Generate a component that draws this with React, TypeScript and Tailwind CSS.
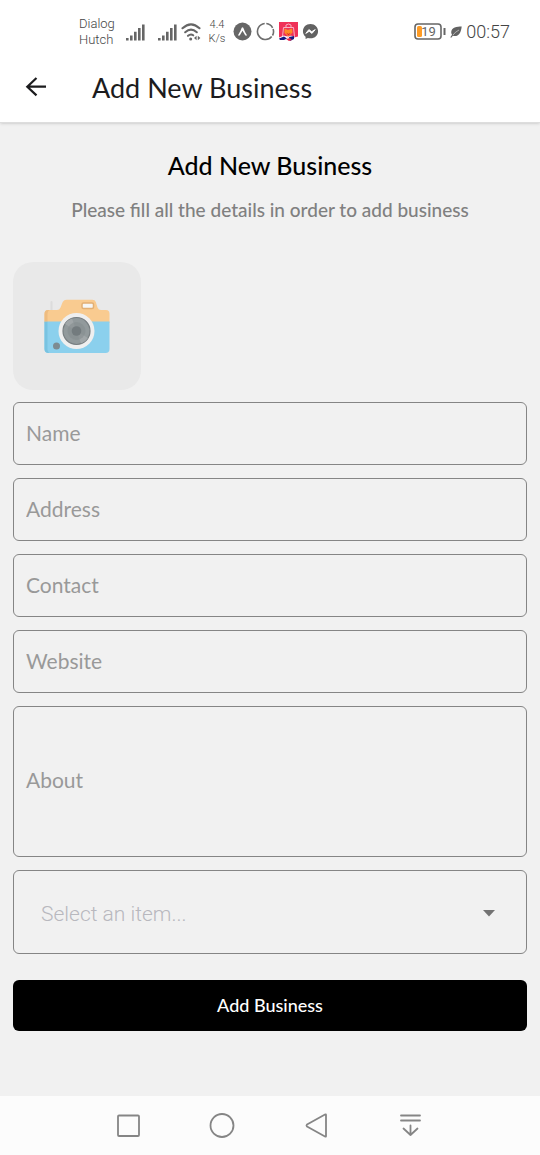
import { useState } from "react";
import type { ReactNode } from "react";

function Signal() {
  return (
    <svg className="h-5 w-5" viewBox="0 0 20 20" fill="#666" aria-hidden="true">
      <path d="M1 16h2.600v2.500H1zM5 13.500h2.600v5H5zM9 9.800h2.600v8.700H9zM13 6h2.600v12.500H13zM17 2.500h2.600v16H17z" />
    </svg>
  );
}

function Wifi() {
  return (
    <svg className="h-5 w-5" viewBox="0 0 20 20" fill="none" stroke="#666" strokeWidth="2.100" strokeLinecap="round" aria-hidden="true">
      <path d="M1.500 6.200Q10-1.600 18.500 6.200M4.200 10.200q5.800-5 11.600 0M7 13.800q2.800-2.400 5.200-.5" />
      <circle cx="9.700" cy="17" r="1.500" fill="#666" stroke="none" />
      <path d="M15.600 13.800v4.400L13 16zM16.800 13.800v4.400l2.600-2.200z" fill="#666" stroke="none" />
    </svg>
  );
}

function StatusBar() {
  return (
    <div className="flex h-[63px] items-center justify-between pl-[79px] pr-[30px] font-['Roboto',sans-serif] text-[#666]">
      <div className="flex items-center">
        <div className="w-[46px] text-[13px] font-light leading-4 text-[#444]">
          <div>Dialog</div>
          <div>Hutch</div>
        </div>
        <Signal />
        <div className="ml-3 flex gap-1">
          <Signal />
          <Wifi />
        </div>
        <div className="ml-1 w-6 text-center text-[11px] font-light leading-[14px] text-[#444]">
          <div>4.4</div>
          <div>K/s</div>
        </div>
        <div className="ml-1 flex items-center gap-1">
          <svg className="size-[19px]" viewBox="0 0 19 19" aria-hidden="true">
            <circle cx="9.500" cy="9.500" r="9" fill="#666" />
            <path d="M5 13.200Q7.700 9 8.700 5.700q.8-1 1.600 0Q11.600 9.500 14 13.200q-1.200 1-2-.3L9.500 8.800 7 12.900q-.8 1.300-2 .3z" fill="#fff" />
          </svg>
          <svg className="size-[19px]" viewBox="0 0 19 19" fill="none" stroke="#6e6e6e" strokeWidth="1.600" aria-hidden="true">
            <path d="M10.300 1.500a8 8 0 0 1 6.300 4.300M17.100 7a8 8 0 0 1-.6 6.500M15.700 14.500A8 8 0 1 1 8.700 1.500" />
          </svg>
          <svg className="size-[19px]" viewBox="0 0 19 19" aria-hidden="true">
            <path fill="#ef3158" d="M0 0h19v19H0z" />
            <path d="M4.500 5.500h10l1 9h-12zM7 5.500V3q2.500-2 5 0v2.500" fill="none" stroke="#f7b2c4" />
            <path d="M5.500 6.500l3.500 1.500 4-1.500.5 4-4 4-4-3.500z" fill="#ff8b24" />
            <path d="M7 10.500l2.500 1.500 2.500-1.500-2.500 3z" fill="#d51736" />
            <path d="M0 15.500l5-2 4 2 3-2 3 2 4-1V19H0z" fill="#fff" />
            <path d="M0 16.500l5-2 3 2-3 1.500H1zM10 15l5-1v3l-4 2z" fill="#191a82" />
            <path d="M7 17l4-1 2 2-3 1z" fill="#e52449" />
          </svg>
          <svg className="size-[17px]" viewBox="0 0 18 18" aria-hidden="true">
            <path d="M9 1C4.200 1 1 4.400 1 8.700c0 2.400 1 4.400 2.800 5.800V17l2.400-1.200c.9.200 1.800.4 2.800.4 4.800 0 8-3.300 8-7.500S13.800 1 9 1z" fill="#626262" />
            <path d="M4 11l3.300-4 3 2.200L14 7l-3.400 4-3-2.200z" fill="#fff" stroke="#fff" strokeLinejoin="round" />
          </svg>
        </div>
      </div>
      <div className="flex items-center">
        <svg className="h-[18px] w-8" viewBox="0 0 32 18" role="img" aria-label="Battery 19 percent">
          <rect x="1" y="1" width="26" height="15" rx="3" fill="#fff" stroke="#666" strokeWidth="1.600" />
          <rect x="3" y="3" width="5" height="11" rx="1.500" fill="#ff9c25" />
          <path d="M30.500 5v7" stroke="#666" strokeWidth="2" />
          <text x="14.500" y="13" textAnchor="middle" fontFamily="Roboto, sans-serif" fontSize="13" fill="#666">19</text>
        </svg>
        <svg className="ml-1 h-3 w-3" viewBox="0 0 12 12" aria-hidden="true">
          <path d="M11.700.500C7 .500 1.200 1.500 1.200 6.300c0 1 .3 1.800.8 2.500L.3 11.200l.9.500 1.700-2c4.300 1.500 8-1 8.800-9.200z" fill="#626262" />
          <path d="M3 9q2-3 6-5" stroke="#fff" strokeWidth=".5" fill="none" />
        </svg>
        <time className="ml-1 text-[18px] font-light leading-6 text-[#444]">00:57</time>
      </div>
    </div>
  );
}

function Camera() {
  return (
    <svg className="h-[56px] w-[66px]" viewBox="0 0 66 56" aria-hidden="true">
      <path d="M7.500 4v8" stroke="#dcdcdc" strokeWidth="2" strokeLinecap="round" />
      <path d="M4 12h9q2.500 0 3.500-2.500l2.200-5.500Q20 1.700 22.500 1.700h26q2.500 0 3.300 2.300l1.700 5.500Q54.500 12 57 12h5q3.500 0 3.500 4v9H.5v-9q0-4 3.500-4z" fill="#f9cb90" />
      <path d="M.5 23.500h65V51q0 4-4 4h-57q-4 0-4-4z" fill="#8bd0ed" />
      <path d="M.5 23.500h3V52l1.500 3q-4.500 0-4.500-4z" fill="#79c3e1" />
      <path d="M4 12q-3.500 0-3.500 4v7.500h3V16q0-3 2-4z" fill="#eebc80" />
      <rect x="38" y="5" width="11.500" height="5.500" rx="1.500" fill="#f6f6f5" stroke="#e2af74" strokeWidth="1.500" />
      <circle cx="32.500" cy="33" r="18" fill="#efefef" />
      <circle cx="32.500" cy="33" r="13.500" fill="#929a9c" stroke="#777e81" strokeWidth="1.200" />
      <path d="M32.500 33L21 26a13 13 0 0 1 7-5.500zM32.500 33L44 40a13 13 0 0 1-7 5.500z" fill="#a0a6a8" />
      <circle cx="32.500" cy="33" r="9" fill="#858d90" opacity=".6" />
      <circle cx="32.500" cy="33" r="4.800" fill="#737b7e" />
      <circle cx="12.500" cy="48" r="3.500" fill="#7d8b91" />
    </svg>
  );
}

const fieldClass =
  "block w-full rounded-md border border-[#858585] bg-transparent px-3 text-[21px] leading-7 text-black outline-none placeholder:text-[#999]";

function NavButton({ label, children }: { label: string; children: ReactNode }) {
  return (
    <button type="button" aria-label={label} className="flex h-full w-[94px] items-center justify-center">
      <svg className="size-7" viewBox="0 0 28 28" fill="none" stroke="#858585" strokeWidth="1.800" strokeLinecap="round" strokeLinejoin="round" aria-hidden="true">
        {children}
      </svg>
    </button>
  );
}

export default function App() {
  const [category, setCategory] = useState("");

  return (
    <div className="flex min-h-screen flex-col bg-[#f1f1f1] font-['Lato',sans-serif]">
      <header className="border-b border-[#ddd] bg-white shadow-sm">
        <StatusBar />
        <div className="flex h-[59px] items-start pl-6">
          <button type="button" aria-label="Go back" className="mt-3 flex size-6 items-center justify-center">
            <svg className="size-6" viewBox="0 0 24 24" fill="none" stroke="#1c1c1e" strokeWidth="2.200" aria-hidden="true">
              <path d="M22 11.700H3.500M12.500 3L3.300 11.700l9.200 8.700" />
            </svg>
          </button>
          <h1 className="ml-11 mt-2 text-[27px] leading-[34px] text-[#1c1c1e]">Add New Business</h1>
        </div>
      </header>

      <main className="flex-1 px-[13px] pb-16 pt-[26px]">
        <h2 className="text-center text-[25px] font-medium leading-8 text-black">Add New Business</h2>
        <p className="mt-[17px] text-center text-[19px] font-medium leading-6 text-[#808080]">
          Please fill all the details in order to add business
        </p>
        <button type="button" aria-label="Add photo" className="mt-10 flex size-32 items-center justify-center rounded-[20px] bg-[#e9e9e9]">
          <Camera />
        </button>
        <form className="mt-3 flex flex-col gap-[13px]" onSubmit={(e) => e.preventDefault()}>
          <input aria-label="Name" placeholder="Name" className={`${fieldClass} h-[63px] pb-0.5`} />
          <input aria-label="Address" placeholder="Address" className={`${fieldClass} h-[63px] pb-0.5`} />
          <input aria-label="Contact" type="tel" placeholder="Contact" className={`${fieldClass} h-[63px] pb-0.5`} />
          <input aria-label="Website" type="url" placeholder="Website" className={`${fieldClass} h-[63px] pb-0.5`} />
          <textarea aria-label="About" placeholder="About" className={`${fieldClass} h-[151px] resize-none pt-[59px]`} />
          <div className="relative">
            <select
              aria-label="Category"
              value={category}
              onChange={(e) => setCategory(e.target.value)}
              className="block h-[84px] w-full appearance-none rounded-md border border-[#858585] bg-transparent px-[27px] pt-1.5 font-['Roboto',sans-serif] text-[21px] font-light text-[#b8b8be] outline-none"
            >
              <option value="">Select an item...</option>
            </select>
            <svg className="pointer-events-none absolute right-8 top-10 h-[7px] w-3" viewBox="0 0 12 7" aria-hidden="true">
              <path d="M0 0h12L6 6.500z" fill="#737373" />
            </svg>
          </div>
          <button type="submit" className="mt-[13px] h-[51px] w-full rounded-md bg-black pb-0.5 text-[18px] font-medium leading-6 text-white">
            Add Business
          </button>
        </form>
      </main>

      <nav aria-label="System navigation" className="flex h-[59px] items-center justify-center bg-[#fcfcfc] pr-0.5">
        <NavButton label="Recent apps">
          <rect x="4" y="3.500" width="21" height="20.500" rx="1" />
        </NavButton>
        <NavButton label="Home">
          <circle cx="14" cy="13.500" r="11.500" />
        </NavButton>
        <NavButton label="Back">
          <path d="M24 3v21q0 1-1 .5L5 14.500q-1-1 0-2L23 2.500q1-.5 1 .5z" />
        </NavButton>
        <NavButton label="Hide navigation bar">
          <path d="M5 3.500h19M5 8.500h19M14.500 13.500V23M7.500 16.500l7 6.500 7-6.500" />
        </NavButton>
      </nav>
    </div>
  );
}
